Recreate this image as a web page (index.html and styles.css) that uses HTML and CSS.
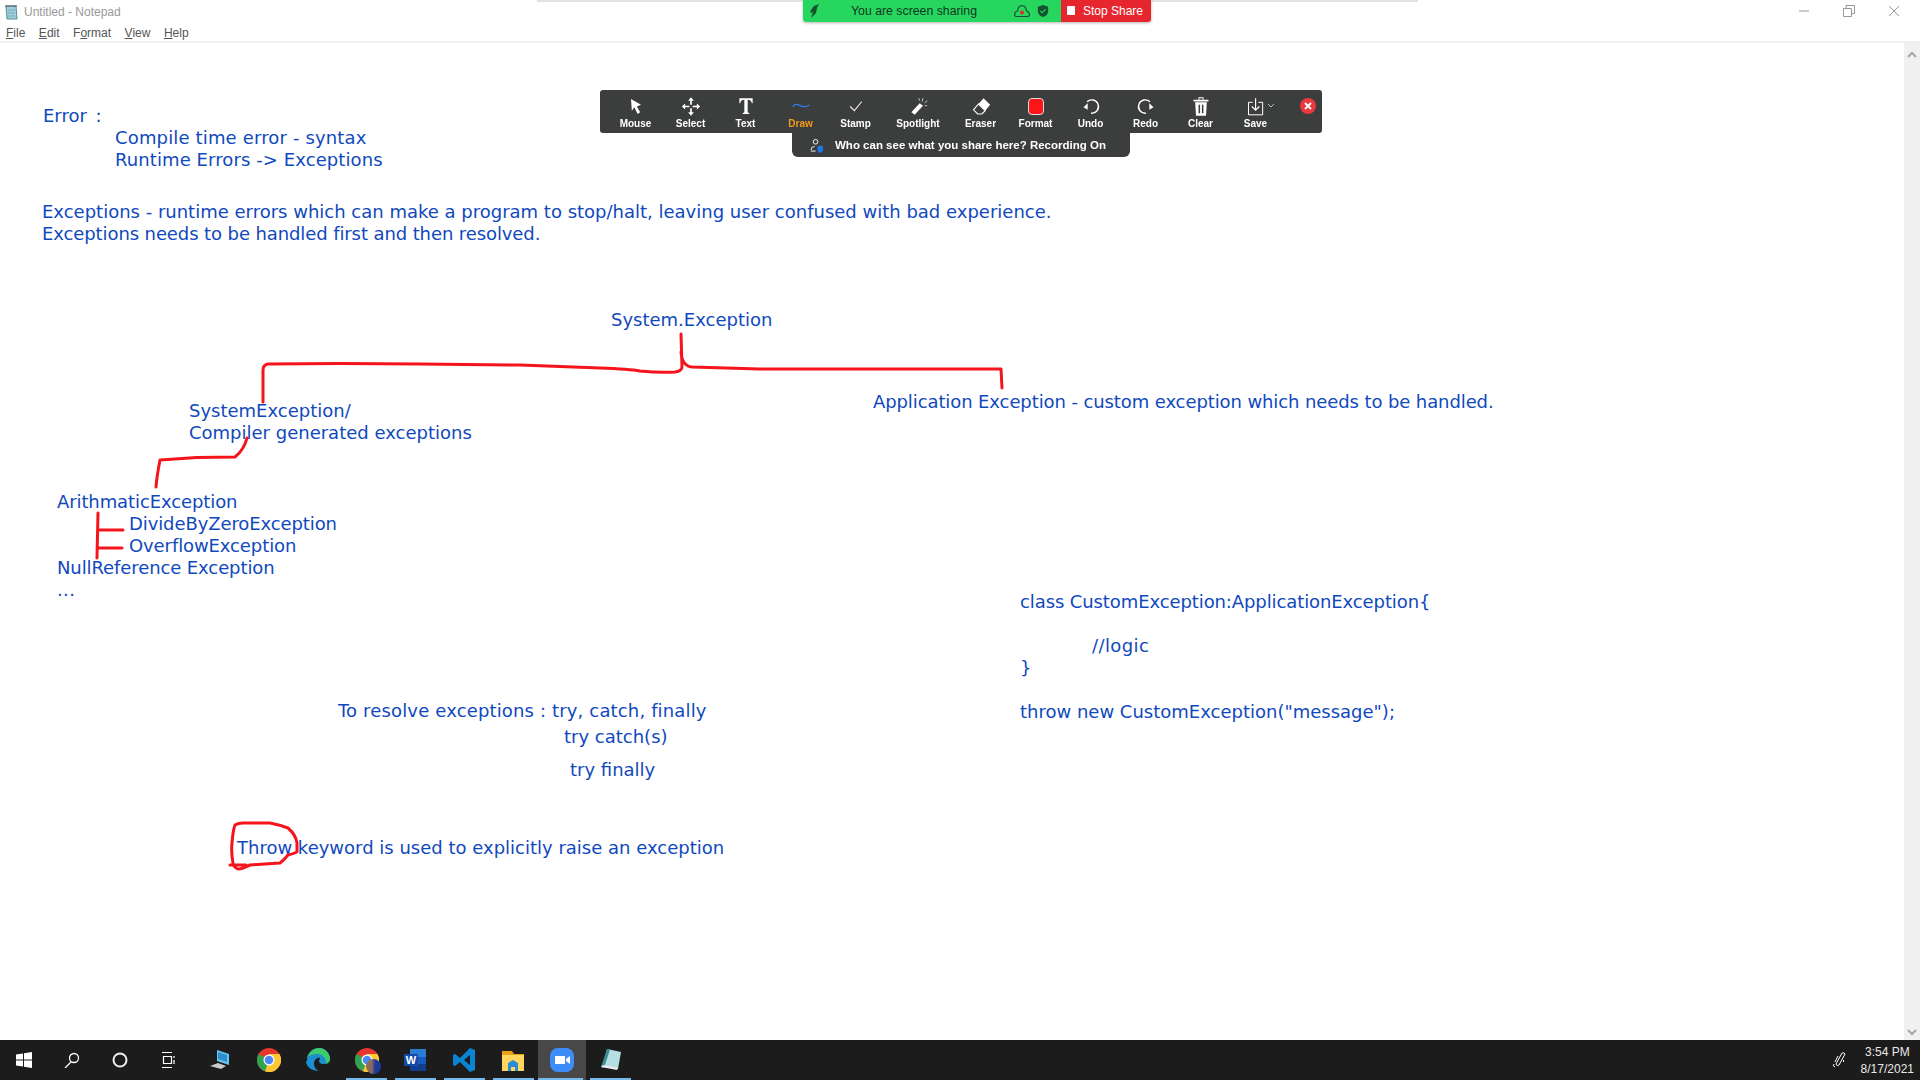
FILE: index.html
```html
<!DOCTYPE html>
<html lang="en">
<head>
    <meta charset="UTF-8">
    <title>Untitled - Notepad</title>
    <link rel="stylesheet" href="styles.css">
</head>
<body>
    <div class="window">
        <header class="titlebar">
            <svg class="app-icon" viewBox="0 0 16 16"><path d="M3 2h10l1 13H4z" fill="#9fd0dc" stroke="#5a8a99"/><path d="M5 6h7M5 9h7M5 12h7" stroke="#6fa9b8"/><path d="M3 1v2M5 1v2M7 1v2M9 1v2M11 1v2M13 1v2" stroke="#555"/></svg>
            <span class="title">Untitled - Notepad</span>
            <div class="win-controls">
                <svg viewBox="0 0 12 12" width="12" height="12"><path d="M1 6h10" stroke="#999"/></svg>
                <svg viewBox="0 0 12 12" width="12" height="12"><path d="M.5 3.500h8v8h-8zM3 3V.5h8.500v8H9" fill="none" stroke="#999"/></svg>
                <svg viewBox="0 0 12 12" width="12" height="12"><path d="M1 1l10 10M11 1L1 11" stroke="#999"/></svg>
            </div>
        </header>
        <nav class="menubar">
            <span><u>F</u>ile</span>
            <span><u>E</u>dit</span>
            <span>F<u>o</u>rmat</span>
            <span><u>V</u>iew</span>
            <span><u>H</u>elp</span>
        </nav>
        <main class="editor">
            <div class="doc">
                <div class="col-left">
                    <p class="ln-error">Error :</p>
                    <p class="ln-tab1 wide">Compile time error - syntax</p>
                    <p class="ln-tab1 wide-s">Runtime Errors -&gt; Exceptions</p>
                    <p class="ln-para">Exceptions - runtime errors which can make a program to stop/halt, leaving user confused with bad experience.</p>
                    <p class="ln-body tight">Exceptions needs to be handled first and then resolved.</p>
                    <p class="ln-root">System.Exception</p>
                    <p class="ln-sys">SystemException/</p>
                    <p class="ln-comp">Compiler generated exceptions</p>
                    <p class="ln-arith tight">ArithmaticException</p>
                    <p class="ln-sub tight">DivideByZeroException</p>
                    <p class="ln-sub tight">OverflowException</p>
                    <p class="ln-null tight">NullReference Exception</p>
                    <p class="ln-null dots">...</p>
                    <p class="ln-resolve wide">To resolve exceptions : try, catch, finally</p>
                    <p class="ln-try">try catch(s)</p>
                    <p class="ln-fin">try finally</p>
                    <p class="ln-throw">Throw keyword is used to explicitly raise an exception</p>
                </div>
                <div class="col-right">
                    <p class="ln-app tight">Application Exception - custom exception which needs to be handled.</p>
                    <p class="ln-class tight">class CustomException:ApplicationException{</p>
                    <p class="ln-logic dots">//logic</p>
                    <p class="ln-brace">}</p>
                    <p class="ln-new">throw new CustomException("message");</p>
                </div>
            </div>

            <!-- pen annotations, viewBox starts at the editor top so these are page coords -->
            <svg class="ink" viewBox="0 43 1904 997" width="1904" height="997">
                <path d="M263 402L263 370Q263 365 268 364L340 363.500L420 364L520 365L600 368Q630 369 640 371Q660 373 675 372Q682 371 682 367L681 334M681 352Q682 366 692 367L760 369L1001 369L1002 388"/>
                <path d="M247 438Q244 450 235 457L197 457.500L160 460Q157 475 156 487"/>
                <path d="M98 513L97 558M98 530L123 530M97 548L122 548"/>
                <path d="M233 863Q231 852 232 843Q233 830 235 825Q238 823 243 823L270 823Q280 825 288 828Q296 835 297 843L297 852Q293 854 288 855Q284 860 280 863L250 865L243 868Q238 870 236 868L233 865M230 865L246 865"/>
            </svg>
        </main>
        <div class="scrollbar">
            <svg viewBox="0 0 10 8" width="10" height="8"><path d="M1 6l4-4 4 4" fill="none" stroke="#a6a6a6" stroke-width="2"/></svg>
            <svg viewBox="0 0 10 8" width="10" height="8"><path d="M1 2l4 4 4-4" fill="none" stroke="#a6a6a6" stroke-width="2"/></svg>
        </div>
    </div>

    <!-- zoom sharing controls float over notepad -->
    <div class="share-edge"></div>
    <div class="share-bar">
        <div class="share-status">
            <svg class="leaf" viewBox="0 0 12 14"><path d="M10 0L5 2 2 6 1 9l3-1-2 6 5-5 1-5z" fill="#14532d"/></svg>
            <span class="share-text">You are screen sharing</span>
            <svg class="cloud" viewBox="0 0 16 14"><path d="M2 12.500Q0 12 1 9q1-2 2.500-2Q4 2 8 1.500 12 2 12.500 7q1.500 0 2.500 2 1 3-1 3.500z" fill="none" stroke="#14532d" stroke-width="1.200"/><circle cx="8" cy="8.500" r="2" fill="#e8262c"/></svg>
            <svg class="shield" viewBox="0 0 14 16"><path d="M7 1l6 2v5q0 5-6 7q-6-2-6-7V3z" fill="#14532d"/><path d="M4 8l2 2 4-4" fill="none" stroke="#26d65f" stroke-width="1.300"/></svg>
        </div>
        <div class="share-stop"><i></i>Stop Share</div>
    </div>

    <div class="toolbar">
        <div class="tool"><svg viewBox="0 0 24 22"><path d="M6 2l12 7-5 2 4 7-3 2-4-8-3 4z" fill="#fff"/></svg><span>Mouse</span></div>
        <div class="tool"><svg viewBox="0 0 24 22"><path d="M12 0l3.500 4H13v5h-2V4H8.500zM12 22l3.500-4H13v-5h-2v5H8.500zM1 11l4-3.500V10h5v2H5v2.500zM23 11l-4-3.500V10h-5v2h5v2.500z" fill="#fff"/></svg><span>Select</span></div>
        <div class="tool"><svg viewBox="0 0 24 22"><path d="M4 1h16v6h-1q-1-4-5-4v15l2 1v1H8v-1l2-1V3Q6 3 5 7H4z" fill="#fff"/></svg><span>Text</span></div>
        <div class="tool active"><svg viewBox="0 0 24 22"><path d="M2 11q3-4 7-2t6 2q4 1 7-2" fill="none" stroke="#2d7cf0" stroke-width="1.500"/></svg><span>Draw</span></div>
        <div class="tool"><svg viewBox="0 0 24 22"><path d="M5 11l5 5 9-11" fill="none" stroke="#eee" stroke-width="1.300"/></svg><span>Stamp</span></div>
        <div class="tool wide-tool"><svg viewBox="0 0 24 22"><path d="M4 18l10-11 4 3-10 11z" fill="#fff"/><path d="M17 5l1-4M20 7l3-3M20 10h3M14 4l-1-3" stroke="#ddd"/></svg><span>Spotlight</span></div>
        <div class="tool"><svg viewBox="0 0 24 22"><path d="M15 1l8 8-6 7-8-8z" fill="#fff"/><path d="M9 8l8 8-4 4H8l-5-5z" fill="none" stroke="#fff" stroke-width="1.300"/></svg><span>Eraser</span></div>
        <div class="tool"><i class="swatch"></i><span>Format</span></div>
        <div class="tool"><svg viewBox="0 0 24 22"><path d="M7.300 5.400A8 8 0 1 1 12 19" fill="none" stroke="#fff" stroke-width="1.700"/><path d="M3 12l5-5v8z" fill="#fff"/></svg><span>Undo</span></div>
        <div class="tool"><svg viewBox="0 0 24 22"><path d="M16.700 5.400A8 8 0 1 0 12 19" fill="none" stroke="#fff" stroke-width="1.700"/><path d="M21 12l-5-5v8z" fill="#fff"/></svg><span>Redo</span></div>
        <div class="tool"><svg viewBox="0 0 24 22"><path d="M5 6h14l-1 16H6zM3 3h18v2H3zM9 0h6v3h-1V1h-4v2H9z" fill="#fff"/><path d="M10 9v10M14 9v10" stroke="#3c3d3d" stroke-width="1.800"/></svg><span>Clear</span></div>
        <div class="tool"><svg viewBox="0 0 24 22"><path d="M8 6H3v15h17V6h-5" fill="none" stroke="#fff" stroke-width="1.200"/><path d="M11.500 1v14M7 11l4.500 4.500L16 11" fill="none" stroke="#fff" stroke-width="1.400"/></svg><span>Save</span></div>
        <svg class="caret" viewBox="0 0 8 6"><path d="M1 1l3 3 3-3" fill="none" stroke="#bbb"/></svg>
        <svg class="tool-close" viewBox="0 0 16 16"><circle cx="8" cy="8" r="8" fill="#ea3a3f"/><path d="M5 5l6 6M11 5l-6 6" stroke="#fff" stroke-width="1.800"/></svg>
    </div>
    <div class="who-bar">
        <svg viewBox="0 0 14 16"><circle cx="6" cy="4" r="2.500" fill="none" stroke="#fff"/><path d="M1 13q0-4 4-4" fill="none" stroke="#fff"/><path d="M1 14h5" stroke="#fff"/><path d="M8 9l3-1 3 1v3q0 3-3 4q-3-1-3-4z" fill="#1f78e6"/></svg>
        <span>Who can see what you share here? Recording On</span>
    </div>

    <footer class="taskbar">
        <div class="tb-item tb-sys"><svg viewBox="0 0 16 16" width="16" height="16"><path d="M0 2.500l7-1v6H0zM8 1.300L16 0v7.500H8zM0 8.500h7v6l-7-1zM8 8.500h8V16l-8-1.300z" fill="#fff"/></svg></div>
        <div class="tb-item tb-sys"><svg viewBox="0 0 16 16" width="16" height="16"><circle cx="10" cy="6" r="4.500" fill="none" stroke="#fff" stroke-width="1.300"/><path d="M7 10l-6 6" stroke="#fff" stroke-width="1.300"/></svg></div>
        <div class="tb-item tb-sys"><svg viewBox="0 0 16 16" width="16" height="16"><circle cx="8" cy="8" r="6.500" fill="none" stroke="#eee" stroke-width="2"/></svg></div>
        <div class="tb-item tb-sys tb-last"><svg viewBox="0 0 16 16" width="16" height="16"><path d="M2 .5h10M2 15.500h10M3.500 4.500h8v7h-8zM14 4v2M14 8v4" fill="none" stroke="#fff" stroke-width="1.200"/></svg></div>
        <div class="tb-item"><svg viewBox="0 0 24 24" width="24" height="24"><path d="M9 2l12 4v11L9 13z" fill="#6cc5f0"/><path d="M10 4l9 3v7l-9-3z" fill="#2c8fd0"/><path d="M2 18l8-3 8 3-5 3z" fill="#ccc"/></svg></div>
        <div class="tb-item"><svg viewBox="0 0 24 24" width="24" height="24"><use href="#chrome-logo"/></svg></div>
        <div class="tb-item"><svg viewBox="0 0 24 24" width="24" height="24"><path d="M1 13C1 5 6 0 13 0c7 0 11 6 11 11 0 4-4 5-7 5-2 0-4-1-4-3 0-1 1-2 1-3-3-1-6 2-6 6 0 3 2 6 5 7-7 0-13-4-13-10z" fill="#1b8fd0"/><path d="M1 10C3 4 8 0 13 0c7 0 11 6 11 11 0 3-2 4-4 5 1-5-3-10-9-10-4 0-8 1-10 4z" fill="#3ecb6b"/></svg></div>
        <div class="tb-item tb-open"><svg viewBox="0 0 24 24" width="24" height="24"><use href="#chrome-logo"/></svg><i class="avatar"></i></div>
        <div class="tb-item tb-open"><svg viewBox="0 0 24 24" width="24" height="24"><path d="M6 1h16v22H6z" fill="#2b7cd3"/><path d="M6 16h16v7H6z" fill="#103f91"/><path d="M6 9h16v7H6z" fill="#185abd"/><path d="M0 6h14v12H0z" fill="#124ba8"/><text x="7" y="16" font-size="11" font-weight="700" fill="#fff" text-anchor="middle" font-family="Liberation Sans">W</text></svg></div>
        <div class="tb-item tb-open"><svg viewBox="0 0 24 24" width="24" height="24"><path d="M18 0l5 2v20l-5 2L8 14l-5 4-2-1v-10l2-1 5 4zM18 7l-6 5 6 5z" fill="#0a84d0"/></svg></div>
        <div class="tb-item tb-open"><svg viewBox="0 0 24 24" width="24" height="24"><path d="M1 3h10l2 3h10v3H1z" fill="#e8a317"/><path d="M1 7h22v16H1z" fill="#ffd75e"/><path d="M7 23v-8l5-3 5 3v8h-3v-4h-4v4z" fill="#2b8bd6"/></svg></div>
        <div class="tb-item tb-open tb-active"><svg viewBox="0 0 24 24" width="24" height="24"><rect width="24" height="24" rx="8" fill="#3d8cf7"/><path d="M5 8h10v8H5zM16 11l4-3v8l-4-3z" fill="#fff"/></svg></div>
        <div class="tb-item tb-open"><svg viewBox="0 0 24 24" width="24" height="24"><path d="M8 1l14 3-3 17-15-3z" fill="#b5dfe2"/><path d="M2 19L8 1l3 .6L5 20z" fill="#3f8b94"/><path d="M2 19l16 3 1-2L4 17z" fill="#eee"/></svg></div>
        <div class="tray">
            <svg viewBox="0 0 16 18" width="16" height="18"><path d="M5 13L11 2q2-1 3 1L8 14q-2 2-3-1zM7 5L4 11M12 9q2 1 0 2M3 13q-2 2 1 3" fill="none" stroke="#fff"/></svg>
            <div class="clock"><span>3:54 PM</span><span>8/17/2021</span></div>
        </div>
    </footer>
    <svg class="defs" width="0" height="0">
        <symbol id="chrome-logo" viewBox="0 0 24 24">
            <circle cx="12" cy="12" r="12" fill="#e3362c"/>
            <path d="M12 12L1.600 6A12 12 0 0 0 8 23.300z" fill="#2ea44f"/>
            <path d="M12 12l-4 11.300A12 12 0 0 0 22.400 6H12z" fill="#fcc934"/>
            <circle cx="12" cy="12" r="5.500" fill="#fff"/>
            <circle cx="12" cy="12" r="4.300" fill="#4a8af4"/>
        </symbol>
    </svg>
</body>
</html>
```

FILE: styles.css
```css
* {
    box-sizing: border-box;
}

html, body {
    margin: 0;
    height: 100%;
    overflow: hidden;
}

body {
    display: flex;
    flex-direction: column;
    background-color: #fff;
    font-family: "Liberation Sans", Arial, sans-serif;
}

.window {
    flex: 1;
    display: grid;
    grid-template-columns: 1fr 16px;
    grid-template-rows: 22px 21px 1fr;
    min-height: 0;
}

.titlebar {
    grid-column: 1 / 3;
    display: flex;
    align-items: center;
    padding: 1px 0 0 3px;
    font-size: 12px;
    color: #999;
}

.app-icon {
    width: 16px;
    height: 16px;
    margin-right: 5px;
}

.win-controls {
    margin-left: auto;
    display: flex;
    gap: 33px;
    padding: 0 20px 2px 0;
}

.menubar {
    grid-column: 1 / 3;
    display: flex;
    gap: 13.500px;
    padding: 4px 0 0 6px;
    font-size: 12px;
    color: #555;
    border-bottom: 2px solid #f0f0f0;
}

.editor {
    position: relative;
    overflow: hidden;
}

.scrollbar {
    display: flex;
    flex-direction: column;
    justify-content: space-between;
    align-items: center;
    padding: 8px 0 4px;
    background-color: #f0f0f0;
}

/* notepad text, every line keeps its own tab offset */
.doc {
    display: grid;
    grid-template-columns: 873px 1fr;
    font-family: "DejaVu Sans", Verdana, sans-serif;
    font-size: 18px;
    line-height: 22px;
    color: #1049bd;
    white-space: nowrap;
}

p {
    margin: 0;
    height: 22px;
}

/* small nudges, the reference font runs a bit wider or narrower per line */
.wide { letter-spacing: 0.15px; }
.wide-s { letter-spacing: 0.09px; }
.tight { letter-spacing: -0.1px; }
.dots { letter-spacing: 0.4px; }

.ln-error { margin: 62px 0 0 43px; word-spacing: 3px; }
.ln-tab1 { margin-left: 115px; }
.ln-para { margin: 30px 0 0 42px; }
.ln-body { margin-left: 42px; }
.ln-root { margin: 64px 0 0 611px; }
.ln-sys { margin: 69px 0 0 189px; }
.ln-comp { margin-left: 189px; }
.ln-arith { margin: 47px 0 0 57px; }
.ln-sub { margin-left: 129px; }
.ln-null { margin-left: 57px; }
.ln-resolve { margin: 99px 0 0 338px; }
.ln-try { margin: 4px 0 0 564px; }
.ln-fin { margin: 11px 0 0 570px; }
.ln-throw { margin: 56px 0 0 237px; }

.ln-app { margin-top: 348px; }
.ln-class { margin: 178px 0 0 147px; }
.ln-logic { margin: 22px 0 0 219px; }
.ln-brace { margin-left: 147px; }
.ln-new { margin: 22px 0 0 147px; }

.ink {
    position: absolute;
    left: 0;
    top: 0;
    pointer-events: none;
}

.ink path {
    fill: none;
    stroke: #f5141c;
    stroke-width: 3;
    stroke-linecap: round;
    stroke-linejoin: round;
}

/* zoom share bars */
.share-edge {
    position: fixed;
    top: 0;
    left: 537px;
    width: 881px;
    height: 2px;
    background-color: #e2e2e2;
}

.share-bar {
    position: fixed;
    top: 0;
    left: 803px;
    width: 348px;
    height: 22px;
    display: flex;
    font-size: 12.300px;
    box-shadow: 0 1px 3px rgba(0, 0, 0, 0.3);
    border-radius: 0 0 3px 3px;
}

.share-status {
    width: 258px;
    display: flex;
    align-items: center;
    background-color: #26d65f;
    color: #12361f;
    border-radius: 0 0 0 3px;
    padding-left: 6px;
}

.leaf {
    width: 12px;
    height: 14px;
    flex: none;
}

.share-text {
    margin-left: 30px;
    width: 127px;
    flex: none;
    white-space: nowrap;
}

.cloud {
    width: 16px;
    height: 14px;
    margin-left: 36px;
    flex: none;
}

.shield {
    width: 12px;
    height: 14px;
    margin-left: 7px;
    flex: none;
}

.share-stop {
    flex: 1;
    display: flex;
    align-items: center;
    padding: 0 0 1px 6px;
    background-color: #e5262e;
    color: #fff;
    font-size: 12px;
    border-radius: 0 0 3px 0;
    white-space: nowrap;
}

.share-stop i {
    width: 8px;
    height: 9px;
    margin-right: 8px;
    background-color: #fff;
    border-radius: 1px;
}

.toolbar {
    position: fixed;
    top: 90px;
    left: 600px;
    width: 722px;
    height: 43px;
    display: flex;
    background-color: #3c3d3d;
    border-radius: 3px;
    padding-left: 8px;
    color: #fff;
}

.tool {
    width: 55px;
    display: flex;
    flex-direction: column;
    align-items: center;
    padding-top: 7px;
    font-size: 10px;
    font-weight: 700;
}

.tool.wide-tool {
    width: 70px;
}

.tool svg {
    width: 20px;
    height: 19px;
    margin-bottom: 2px;
}

.tool.active {
    color: #f29a1a;
}

.swatch {
    width: 16px;
    height: 17px;
    margin: 1px 0 3px;
    background-color: #fb1518;
    border: 1px solid #ddd;
    border-radius: 4px;
}

.caret {
    width: 8px;
    height: 6px;
    margin: 13px 0 0 -16px;
}

.tool-close {
    width: 16px;
    height: 16px;
    margin: 8px 0 0 25px;
}

.who-bar {
    position: fixed;
    top: 133px;
    left: 792px;
    width: 338px;
    height: 24px;
    display: flex;
    align-items: center;
    gap: 12px;
    padding-left: 18px;
    background-color: #3c3d3d;
    border-radius: 0 0 6px 6px;
    color: #fff;
    font-size: 11.500px;
    font-weight: 700;
    white-space: nowrap;
}

.who-bar svg {
    width: 13px;
    height: 15px;
}

/* windows taskbar */
.taskbar {
    height: 40px;
    flex: none;
    display: flex;
    background-color: #1c1c1c;
    color: #e8e8e8;
}

.tb-item {
    position: relative;
    width: 48.800px;
    display: flex;
    align-items: center;
    justify-content: center;
}

.tb-sys {
    width: 48px;
}

.tb-last {
    margin-right: 4px;
}

.tb-open::after {
    content: "";
    position: absolute;
    left: 4px;
    right: 4px;
    bottom: 0;
    height: 2px;
    background-color: #76b9ed;
}

.tb-active {
    background-color: #484848;
}

.tb-active::after {
    left: 0;
    right: 3px;
}

.avatar {
    position: absolute;
    left: 24px;
    top: 19px;
    width: 15px;
    height: 15px;
    border-radius: 50%;
    background: linear-gradient(90deg, #8a6a5c 40%, #1f3a9a 60%);
}

.tray {
    margin-left: auto;
    display: flex;
    align-items: center;
    gap: 14px;
    padding-right: 6px;
}

.clock {
    display: flex;
    flex-direction: column;
    align-items: center;
    gap: 3px;
    font-size: 12px;
}

.defs {
    position: absolute;
}
```
